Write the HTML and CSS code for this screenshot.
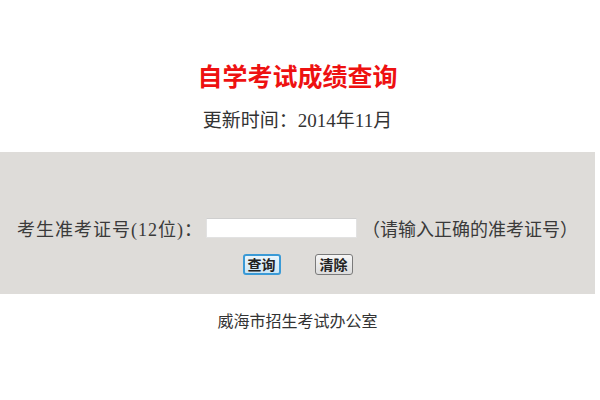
FILE: index.html
```html
<!DOCTYPE html>
<html lang="zh-CN">
<head>
<meta charset="utf-8">
<title>自学考试成绩查询</title>
<link rel="stylesheet" href="styles.css">
</head>
<body>
<div class="page">
  <h1 class="title">自学考试成绩查询</h1>
  <p class="updated">更新时间：2014年11月</p>
  <form class="band">
    <div class="row">
      <label class="label" for="zkz">考生准考证号(12位)：</label>
      <input class="field" id="zkz" type="text">
      <span class="hint">（请输入正确的准考证号）</span>
    </div>
    <div class="actions">
      <button type="button" class="btn btn-focus">查询</button>
      <button type="reset" class="btn">清除</button>
    </div>
  </form>
  <p class="footer">威海市招生考试办公室</p>
</div>
</body>
</html>
```
FILE: styles.css
```css
html, body {
  margin: 0;
  padding: 0;
  background: #ffffff;
}
body {
  font-family: "Liberation Serif", "Noto Sans CJK SC", serif;
  color: #333333;
}
.page {
  display: flex;
  flex-direction: column;
  align-items: stretch;
  padding: 63px 5px 0 0;
}
.title {
  margin: 0;
  text-align: center;
  font-size: 25px;
  line-height: 30px;
  font-weight: bold;
  color: #ee1111;
}
.updated {
  margin: 16px 0 0;
  text-align: center;
  font-size: 19px;
  line-height: 24px;
  color: #333333;
}
.band {
  margin: 19px 0 0;
  height: 142px;
  background: #dedcd9;
  display: flex;
  flex-direction: column;
  align-items: center;
  padding-top: 64px;
  box-sizing: border-box;
}
.row {
  display: flex;
  align-items: center;
  height: 24px;
  font-size: 18px;
  color: #3a3a3a;
}
.label {
  margin-right: 3px;
  letter-spacing: 1px;
}
.field {
  width: 151px;
  height: 20px;
  box-sizing: border-box;
  border: 1px solid #e2e2e2;
  border-top-color: #cfcfcf;
  background: #ffffff;
  margin: 0 5px 0 0;
  padding: 0;
}
.actions {
  display: flex;
  gap: 34px;
  margin-top: 14px;
}
.btn {
  width: 38px;
  height: 21px;
  padding: 0;
  font-family: "Noto Sans CJK SC", sans-serif;
  font-size: 14px;
  font-weight: bold;
  line-height: 17px;
  color: #222222;
  background: linear-gradient(#f6f6f6, #dcdcdc);
  border: 1px solid #7a7a7a;
  border-radius: 3px;
}
.btn-focus {
  border: 2px solid #3a9ad6;
  background: linear-gradient(#eaf5fc, #cde6f5);
}
.footer {
  margin: 18px 0 0;
  text-align: center;
  font-size: 16px;
  line-height: 20px;
  color: #333333;
}
```
